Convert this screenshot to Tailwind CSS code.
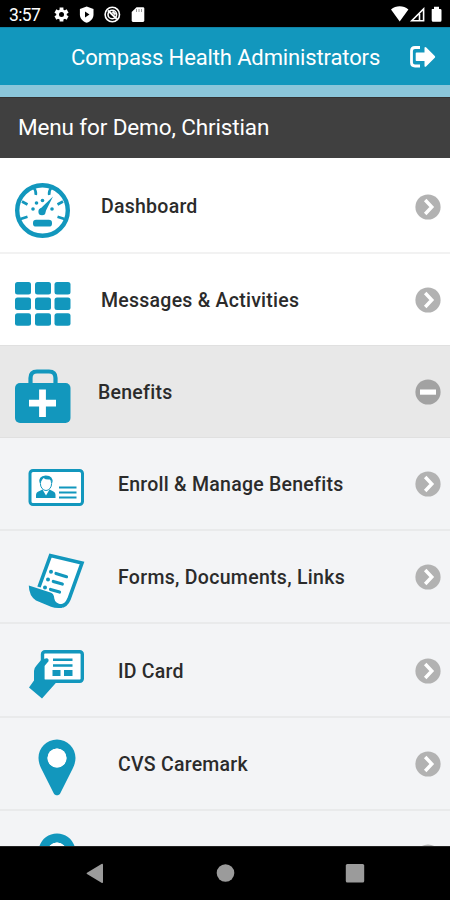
<!DOCTYPE html>
<html lang="en">
<head>
<meta charset="utf-8">
<title>Compass Health Administrators</title>
<script src="https://cdn.jsdelivr.net/npm/@tailwindcss/browser@4"></script>
</head>
<body class="w-[450px] h-[900px] overflow-hidden bg-black font-['Roboto','Liberation_Sans',sans-serif]">
<svg class="hidden">
  <symbol id="go" viewBox="0 0 26 26"><circle cx="13" cy="13" r="12.6" fill="#b2b2b2"/><path d="M10.200 6 16.800 13l-6.600 7" fill="none" stroke="#fff" stroke-width="3.400"/></symbol>
  <symbol id="pin" viewBox="0 0 38 57"><path fill="#1297bd" fill-rule="evenodd" d="M19 .5C8.600.5.5 8.800.5 19c0 4 1.200 7 3 11l12.200 24.300c1.400 2.700 5.200 2.700 6.600 0L34.500 30c1.800-4 3-7 3-11C37.500 8.800 29.400.5 19 .5zM19 9.400a9.600 9.600 0 1 1 0 19.200a9.600 9.600 0 0 1 0-19.200z"/><circle cx="19" cy="19" r="9.400" fill="#fff"/></symbol>
</svg>
<div class="flex flex-col h-full">
  <div class="h-[27px] shrink-0 bg-black flex items-center justify-between text-white">
    <div class="flex items-center">
      <span class="w-[45px] pl-[9px] pt-[2px] text-[17.5px] leading-[20px] tracking-[-0.6px]">3:57</span>
      <svg class="w-[105px] h-[27px]" viewBox="45 0 105 27">
        <g fill="#fff"><circle cx="61.500" cy="14.500" r="5.200"/><g stroke="#fff" stroke-width="3.800"><path d="M61.500 7.500v14M55.400 11l12.200 7M55.400 18l12.200-7"/></g><circle cx="61.500" cy="14.500" r="2.500" fill="#000"/>
        <path d="M86.700 6.500 93.500 9v5.500c0 4-2.600 6.800-6.800 8.300-4.200-1.500-6.800-4.300-6.800-8.300V9z"/><path d="M85 11.500l4.500 3-4.500 3z" fill="#000"/>
        <path d="M136.500 7.300h6.500a1.300 1.300 0 0 1 1.300 1.300v12a1.300 1.300 0 0 1-1.300 1.300h-10a1.300 1.300 0 0 1-1.300-1.300v-8.500z"/></g>
        <path d="M136.500 9v3M139 9v3M141.500 9v3" stroke="#000" stroke-width=".4"/>
        <g fill="none" stroke="#fff"><circle cx="112.300" cy="14.500" r="7.200" stroke-width="1.600"/><circle cx="112.300" cy="14.500" r="4.300" stroke-width="1.600"/><path d="m108 10.500 8.800 8.500" stroke-width="2"/><path d="M112.500 11.500l3 3" stroke-width="2"/></g>
      </svg>
    </div>
    <svg class="w-[65px] h-[27px]" viewBox="385 0 65 27"><path fill="#fff" d="M391 9.500c5-4.200 12.400-4.200 17.400 0L399.700 21.500zM432 9h2V6.700h5V9h1.200q1.300 0 1.300 1.300v9.900q0 1.500-1.300 1.500h-7q-1.500 0-1.500-1.500V10.300Q431.700 9 432 9z"/><path d="M411.800 20.800h11.800V9zM419.500 20V14" fill="none" stroke="#fff" stroke-width="1.600"/></svg>
  </div>
  <header class="h-[58px] shrink-0 bg-[#1297bd] flex items-center text-white border-t border-[#0f84a8]">
    <h1 class="pl-[71px] w-[408px] whitespace-nowrap text-[22px] tracking-[-0.130px] leading-[28px] pt-[3px]">Compass Health Administrators</h1>
    <svg class="w-[28px] h-[24px]" viewBox="408 45 28 24"><path d="M420 47.500h-5q-3.500 0-3.500 3.500v11.500q0 3.500 3.500 3.500h5" fill="none" stroke="#fff" stroke-width="2.800"/><path fill="#fff" d="M416.500 52.500h8v-5q.8-1 1.800 0l8.500 8.500q.9.900 0 1.800l-8.500 8.500q-1 1-1.800 0v-5.300h-8q-.8 0-.8-.8v-7q0-.7.800-.7z"/></svg>
  </header>
  <div class="h-[12px] shrink-0 bg-[#8bc6da]"></div>
  <div class="h-[61px] shrink-0 bg-[#404040] border-t border-[#333] flex items-center pl-[18px] text-white text-[22.500px] tracking-[-0.130px] whitespace-nowrap">Menu for Demo, Christian</div>
  <main class="flex-1 min-h-0 overflow-hidden bg-[#f3f4f6] text-[19.500px] font-medium text-[#2b2b2b] tracking-[0.250px] whitespace-nowrap">
    <div class="h-[96px] bg-white border-b-2 border-[#f2f2f2] flex items-center">
      <svg class="w-[101px] h-[94px]" viewBox="0 158 101 94">
        <g fill="none" stroke="#1297bd"><circle cx="42.500" cy="210.500" r="25.300" stroke-width="4.400"/>
        <path stroke-width="2.600" d="M33.500 187.500q3 3.500 2.300 7.500M51.500 187.500q-3 3.500-2.300 7.500M22 201.500l5.500 3M63 201.500l-5.500 3M20.500 219l7-2.300M64.500 219l-7-2.300"/></g>
        <g fill="#1297bd"><circle cx="42" cy="211.700" r="3.600"/><path d="M39.500 209.500 53 196.500l-8 16z"/><rect x="33" y="219.800" width="19" height="6.800" rx="3.200"/><circle cx="33" cy="209" r="1.800"/><circle cx="36.500" cy="203" r="1.800"/><circle cx="42.500" cy="200.500" r="1.800"/><circle cx="52" cy="209" r="1.800"/></g>
      </svg>
      <span class="flex-1 pt-[4px]">Dashboard</span>
      <svg class="w-[26px] h-[26px] mr-[9px] mt-[3px]"><use href="#go"/></svg>
    </div>
    <div class="h-[91px] bg-white flex items-center">
      <svg class="w-[101px] h-[91px]" viewBox="0 254 101 91"><g fill="#1297bd"><rect x="15" y="282" width="16" height="12.500" rx="2.500"/><rect x="35" y="282" width="16" height="12.500" rx="2.500"/><rect x="54.500" y="282" width="16" height="12.500" rx="2.500"/><rect x="15" y="297.500" width="16" height="12.500" rx="2.500"/><rect x="35" y="297.500" width="16" height="12.500" rx="2.500"/><rect x="54.500" y="297.500" width="16" height="12.500" rx="2.500"/><rect x="15" y="313.300" width="16" height="12.500" rx="2.500"/><rect x="35" y="313.300" width="16" height="12.500" rx="2.500"/><rect x="54.500" y="313.300" width="16" height="12.500" rx="2.500"/></g></svg>
      <span class="flex-1 pt-[2px]">Messages &amp; Activities</span>
      <svg class="w-[26px] h-[26px] mr-[9px] mt-px"><use href="#go"/></svg>
    </div>
    <div class="h-[93px] bg-[#e8e8e8] border-y border-[#e0e0e0] flex items-center">
      <svg class="w-[98px] h-[91px]" viewBox="0 346 98 91"><path d="M30.500 384v-6q0-6.500 6.500-6.500h12q6.500 0 6.500 6.500v6" fill="none" stroke="#1297bd" stroke-width="4.200"/><rect x="15" y="383" width="55.500" height="40" rx="5" fill="#1297bd"/><path d="M42.500 389.500v27.500M29 403.200h27" stroke="#fff" stroke-width="6.800"/></svg>
      <span class="flex-1 pt-[2px]">Benefits</span>
      <svg class="w-[26px] h-[26px] mr-[9px]" viewBox="0 0 26 26"><circle cx="13" cy="13" r="12.600" fill="#a2a2a2"/><rect x="5" y="10.500" width="16" height="5.200" fill="#fff"/></svg>
    </div>
    <div class="h-[93px] border-b-2 border-[#e9eaeb] flex items-center">
      <svg class="w-[118px] h-[91px]" viewBox="0 438 118 91"><rect x="30" y="470.500" width="52.500" height="34" rx="3" fill="#fff" stroke="#1297bd" stroke-width="3"/><path d="M59 487.500h17.500M59 492.500h17.500M59 497.500h17.500" stroke="#1297bd" stroke-width="2.200"/><path fill="#1297bd" d="M36 498v-3q0-3 3.500-4l3-1.500 3.500 6 3.500-6 3 1.500q3 1 3 4v3z"/><ellipse cx="46" cy="483.500" rx="5.600" ry="7" fill="#fff" stroke="#1297bd" stroke-width="1"/><path fill="#1297bd" d="M39.500 483q-1.500-7 6-7.500 8-.2 7 7.500l-2-3.500q-5 .5-7-1.500z"/></svg>
      <span class="flex-1 pt-[2px]">Enroll &amp; Manage Benefits</span>
      <svg class="w-[26px] h-[26px] mr-[9px] mt-px"><use href="#go"/></svg>
    </div>
    <div class="h-[93px] border-b-2 border-[#e9eaeb] flex items-center">
      <svg class="w-[118px] h-[91px]" viewBox="0 531 118 91"><path d="M39 587 50.500 555.500 82 563 69 599q-3 7.500-9.500 7" fill="#fff" stroke="#1297bd" stroke-width="3.600"/><path d="M30.500 588l22 6.500q0 9 8 11.500" fill="#fff"/><path d="M28.800 585.500 50.500 592.500q3.500 1 3.800 6 .7 5 7.700 6v3.300q-6 .8-11-1L36 600.500q-7-4.500-7.200-15z" fill="#1297bd"/><path d="M56 573.500l10.500 3.200M53.300 581.500l9 2.500M50.500 589.500l9 2.500" stroke="#1297bd" stroke-width="3.200" stroke-linecap="round"/><g fill="#1297bd"><circle cx="51" cy="571.800" r="2"/><circle cx="48" cy="579.500" r="2"/><circle cx="45" cy="587.500" r="2"/></g></svg>
      <span class="flex-1 pt-[3px] tracking-[0.300px]">Forms, Documents, Links</span>
      <svg class="w-[26px] h-[26px] mr-[9px] mt-px"><use href="#go"/></svg>
    </div>
    <div class="h-[94px] border-b-2 border-[#e9eaeb] flex items-center">
      <svg class="w-[118px] h-[92px]" viewBox="0 624 118 92"><rect x="42.500" y="651.700" width="39.800" height="29.500" rx="2.500" fill="#fff" stroke="#1297bd" stroke-width="3.400"/><path d="M53 659.700h19.500M53 665.500h19.500" stroke="#1297bd" stroke-width="2.600"/><path d="M52.500 670h8v6h-8zM64 670h8.500v6H64z" fill="#1297bd"/><path fill="#1297bd" d="M29 687.500l5-7V671q0-3 2.500-5.500l5-6 5-1.200q2.500.2 2 3l-4 4.700v14.500h13.500L42 698.500z"/></svg>
      <span class="flex-1 pt-[3px]">ID Card</span>
      <svg class="w-[26px] h-[26px] mr-[9px] mt-px"><use href="#go"/></svg>
    </div>
    <div class="h-[93px] border-b-2 border-[#e9eaeb] flex items-center">
      <div class="w-[118px] pl-[37.500px] pt-[8px]"><svg class="w-[38px] h-[57px]"><use href="#pin"/></svg></div>
      <span class="flex-1 pt-[3px]">CVS Caremark</span>
      <svg class="w-[26px] h-[26px] mr-[9px] mt-px"><use href="#go"/></svg>
    </div>
    <div class="h-[93px] flex items-start justify-between">
      <svg class="w-[38px] h-[57px] ml-[37.500px] mt-[22px]"><use href="#pin"/></svg>
      <svg class="w-[26px] h-[26px] mr-[9px] mt-[33px]"><use href="#go"/></svg>
    </div>
  </main>
  <nav class="h-[54px] shrink-0 bg-black border-t border-[#222]">
    <svg class="w-[450px] h-[53px]" viewBox="0 847 450 53"><g fill="#9b9b9b"><path d="M101.500 864q1.500-.8 1.500 1v17q0 1.500-1.500.8L87 874q-1-.6 0-1.200z"/><circle cx="225.500" cy="873" r="8.800"/><rect x="345.800" y="864" width="18.400" height="18.500" rx="1.500"/></g></svg>
  </nav>
</div>
</body>
</html>
